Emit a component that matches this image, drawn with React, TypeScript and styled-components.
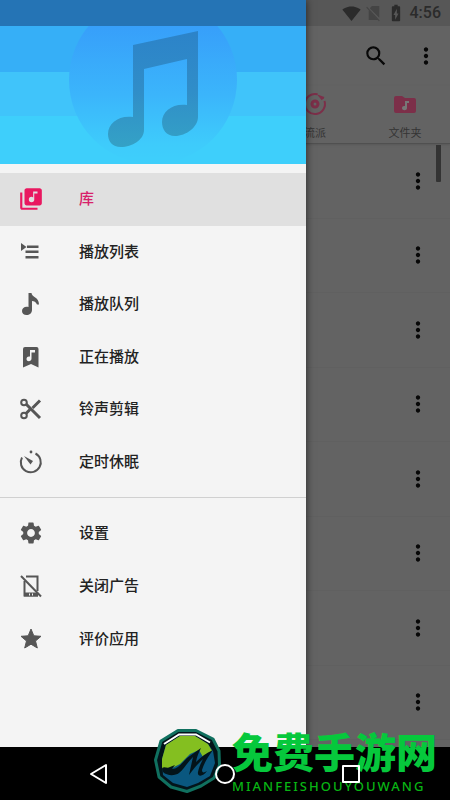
import React from "react";
import styled, { createGlobalStyle } from "styled-components";
import { MdLibraryMusic, MdSettings, MdSearch, MdMoreVert, MdSignalWifi4Bar, MdBatteryChargingFull } from "react-icons/md";

const GlobalStyle = createGlobalStyle`
  *, *::before, *::after { box-sizing: border-box; }
  body {
    margin: 0;
    background: #000;
    font-family: Roboto, "Noto Sans CJK SC", sans-serif;
  }
  button { font: inherit; color: inherit; border: 0; background: none; padding: 0; cursor: pointer; }
  a { color: inherit; text-decoration: none; }
  ul { list-style: none; margin: 0; padding: 0; }
  svg { display: block; flex: none; }
`;

const Screen = styled.div`
  position: relative;
  min-height: 100vh;
  display: flex;
  flex-direction: column;
  overflow: hidden;
`;

const Stage = styled.div`
  position: relative;
  flex: 1;
  display: flex;
`;

const Page = styled.main`
  flex: 1;
  display: flex;
  flex-direction: column;
  background: #636363;
`;

const StatusBar = styled.div`
  height: 26px;
  display: flex;
  align-items: center;
  justify-content: flex-end;
  gap: 4px;
  padding-right: 9px;
  background: #575757;
  color: #2b2b2b;
  font-size: 16px;
  line-height: 28px;
  font-weight: 500;
`;

const Toolbar = styled.header`
  height: 60px;
  display: flex;
  align-items: center;
  justify-content: flex-end;
  gap: 24px;
  padding-right: 11px;
  color: #080808;
`;

const IconButton = styled.button`
  display: flex;
  align-items: center;
  justify-content: center;
`;

const Tabs = styled.nav`
  height: 58px;
  display: flex;
  justify-content: flex-end;
  border-bottom: 1px solid #505050;
  box-shadow: 0 1px 2px #585858;
`;

const Tab = styled.a`
  width: 20%;
  display: flex;
  flex-direction: column;
  align-items: center;
  gap: 10px;
  padding-top: 6px;
  color: #343434;
  font-size: 11px;
  line-height: 16px;
`;

const Songs = styled.ul`
  flex: 1;
  display: flex;
  flex-direction: column;
  padding: 0 0 7px;
`;

const Song = styled.li`
  flex: 1;
  display: flex;
  align-items: center;
  justify-content: flex-end;
  padding-right: 19px;
  border-bottom: 1px solid #606060;
  color: #080808;
`;

const ScrollThumb = styled.div`
  position: absolute;
  top: 145px;
  right: 9px;
  width: 5px;
  height: 37px;
  border-radius: 0 0 1px 1px;
  background: #333;
`;

const Drawer = styled.aside`
  position: absolute;
  top: 0;
  bottom: 0;
  left: 0;
  width: 68%;
  background: #f4f4f4;
  box-shadow: 0 0 8px rgba(0, 0, 0, 0.6);
`;

const Cover = styled.div`
  height: 164px;
  padding-top: 26px;
  display: flex;
  justify-content: center;
  background: linear-gradient(
    #2574b5 26px,
    #36aff7 26px 72px,
    #40c4fa 72px 116px,
    #3ecffb 116px
  );
`;

const Menu = styled.ul<{ $height: number }>`
  height: ${(p) => p.$height}px;
  display: grid;
  grid-auto-rows: 1fr;
`;

const Group = styled.nav`
  padding: 9px 0;
  & + & { border-top: 1px solid #d0d0d0; }
`;

const MenuLink = styled.a<{ $active?: boolean }>`
  height: 100%;
  display: flex;
  align-items: center;
  gap: 35px;
  padding-left: 18px;
  background: ${(p) => (p.$active ? "#e0e0e0" : "transparent")};
  color: ${(p) => (p.$active ? "#d8216a" : "#222")};
  font-size: 15px;
  line-height: 24px;
  font-weight: 500;
  & > svg { color: ${(p) => (p.$active ? "#e91860" : "#565656")}; }
`;

const NavBar = styled.footer`
  height: 53px;
  display: flex;
  align-items: center;
  justify-content: center;
  gap: 106px;
  background: #000;
  color: #fff;
  & button { position: relative; z-index: 2; }
`;

const Watermark = styled.div`
  position: absolute;
  right: 13px;
  bottom: 6px;
  z-index: 1;
  display: flex;
  align-items: flex-end;
  gap: 10px;
  color: #06c83c;
`;

const Brand = styled.div`
  display: flex;
  flex-direction: column;
`;

const BrandName = styled.strong`
  font-family: "Noto Sans CJK SC", sans-serif;
  font-size: 41px;
  line-height: 56px;
  font-weight: 900;
`;

const BrandLatin = styled.span`
  font-family: "Noto Sans", sans-serif;
  font-size: 13px;
  line-height: 16px;
  font-weight: 500;
  letter-spacing: 2px;
  color: #08b414;
`;

const CoverArt = () => (
  <svg width="170" height="138" viewBox="68 26 170 138" aria-hidden="true">
    <defs>
      <linearGradient id="disc" x1="0" y1="26" x2="0" y2="164" gradientUnits="userSpaceOnUse">
        <stop offset="0" stopColor="#379ffa" />
        <stop offset="0.5" stopColor="#3bb5fb" />
        <stop offset="0.85" stopColor="#3ecbfb" />
        <stop offset="1" stopColor="#3ecffb" />
      </linearGradient>
      <linearGradient id="note" x1="0" y1="31" x2="0" y2="148" gradientUnits="userSpaceOnUse">
        <stop offset="0" stopColor="#2c83c9" />
        <stop offset="0.5" stopColor="#308dc8" />
        <stop offset="1" stopColor="#34a2c6" />
      </linearGradient>
    </defs>
    <circle cx="153" cy="80" r="84" fill="url(#disc)" />
    <path
      d="M133 45 198 31V117C198 127 186 136 175 136C166 136 162 129 162 122C162 111 173 103 187 105V59L144 69V130C144 140 132 147 121 147C112 147 108 141 108 134C108 123 119 115 133 117Z"
      fill="url(#note)"
    />
  </svg>
);

const PlaylistIcon = () => (
  <svg width="26" height="26" viewBox="0 0 26 26" fill="currentColor" aria-hidden="true">
    <path d="M3 4 8.500 8 3 12ZM9 6.500H20.500V9H9ZM7.500 11.500H20.500V14H7.500ZM7.500 17H20.500V19.500H7.500Z" />
  </svg>
);

const NoteIcon = () => (
  <svg width="26" height="26" viewBox="0 0 26 26" fill="currentColor" aria-hidden="true">
    <path d="M10.500 2H13.500C13.500 6 21 6 21 13.500H19C18 11 16 10 14 10V19C14 22 11.500 24 8.500 24C6 24 4 22.500 4 20C4 17 7 15 10.500 16Z" />
  </svg>
);

const BookmarkIcon = () => (
  <svg width="26" height="26" viewBox="0 0 26 26" fill="currentColor" aria-hidden="true">
    <path
      fillRule="evenodd"
      d="M7 3H18.500Q20.500 3 20.500 5V23.500L13 20 5 23.500V5Q5 3 7 3ZM12 6V12.500C9.500 12 8.500 13.500 8.500 15C8.500 18 13.500 18 13.500 14.500V8.500H17V6Z"
    />
  </svg>
);

const ScissorsIcon = () => (
  <svg width="26" height="26" viewBox="0 0 26 26" fill="none" stroke="currentColor" strokeWidth="2" aria-hidden="true">
    <circle cx="6" cy="6.500" r="2.800" />
    <circle cx="6" cy="19.500" r="2.800" />
    <path d="M8 8 22 22" strokeWidth="3" />
    <path d="M8 17.500 12 13.500M14.500 12 22 4.500" strokeWidth="3" />
  </svg>
);

const TimerIcon = () => (
  <svg width="26" height="26" viewBox="0 0 26 26" fill="none" stroke="currentColor" strokeWidth="2" aria-hidden="true">
    <path d="M17.500 4.500A10 10 0 1 1 4 8.500" />
    <path d="M6 7 15 12 12.500 15.500Z" fill="currentColor" stroke="none" />
    <circle cx="13" cy="3" r="1.400" fill="currentColor" stroke="none" />
  </svg>
);

const NoAdsIcon = () => (
  <svg width="26" height="26" viewBox="0 0 26 26" fill="none" stroke="currentColor" strokeWidth="2" aria-hidden="true">
    <path d="M8 3.500H19.500V18M6.500 8V22.500H20" />
    <path d="M6 21.500H20" strokeWidth="4" />
    <path d="M3 3 23 23.500" />
    <path d="M11 21.500H12M14 21.500H15" stroke="#f4f4f4" />
  </svg>
);

const StarIcon = () => (
  <svg width="26" height="26" viewBox="0 0 26 26" fill="currentColor" stroke="currentColor" strokeLinejoin="round" aria-hidden="true">
    <path d="M13 3 15.800 9.800 23 10.300 17.500 15 19.300 22 13 18.200 6.700 22 8.500 15 3 10.300 10.200 9.800Z" />
  </svg>
);

const GenreIcon = () => (
  <svg width="24" height="24" viewBox="0 0 24 24" fill="none" stroke="#7c2f49" strokeWidth="2" aria-hidden="true">
    <path d="M14.500 2.300A10 10 0 1 0 21.500 9" />
    <circle cx="12" cy="12" r="3" strokeWidth="3" />
    <path d="M19.500 7.500 17 4.500 21 6" />
  </svg>
);

const FolderIcon = () => (
  <svg width="24" height="24" viewBox="0 0 24 24" aria-hidden="true">
    <path d="M3 4H9L12 6H21Q23 6 23 8V19Q23 21 21 21H3Q1 21 1 19V6Q1 4 3 4Z" fill="#7c2f49" />
    <path d="M12 9H16V11H14V16C14 19 9 19 9 16C9 14 11 14 12 14Z" fill="#777" />
  </svg>
);

const NoSimIcon = () => (
  <svg width="17" height="18" viewBox="0 0 15 17" aria-hidden="true">
    <path d="M6 2H13V13L4 4ZM3 6 12 15H3Z" fill="#444" />
    <path d="M1 3 13 16" stroke="#444" />
  </svg>
);

const Emblem = () => (
  <svg width="68" height="66" viewBox="154 728 68 66" aria-hidden="true">
    <path
      d="M178 730.500H196L213 739 219 751 219.500 765 214 778 201 786 187 791.500 171 787 159 777 155.500 760 161 741Z"
      fill="#03141a"
      stroke="#10705f"
      strokeWidth="3"
      strokeLinejoin="round"
    />
    <path d="M162 759 166 745 180 736H195L208 744 213 751 215 763 210 776 198 783 187 787 173 783 163 775Z" fill="#0a577f" />
    <path d="M162 759 166 745 180 736H195L208 744 212 751 203 757 199 750 190 754 180 764 172 768 162 769Z" fill="#84bf20" />
    <path d="M164 744 179 734.500H196L210 742.500" fill="none" stroke="#fff" strokeWidth="2" />
    <path
      d="M162 768C165 766 167 769 170 767L175 765 172 769C178 769 182 763 187 758L201 748C199 752 197 756 196 762C201 757 206 753 213 750C208 757 204 763 202 770C202 773 204 773 207 771C203 777 197 777 198 772C199 767 201 763 203 759C198 764 194 768 189 775L193 757C187 763 184 769 179 773C175 776 167 776 163 772Z"
      fill="#03141a"
    />
  </svg>
);

const mainItems = [
  { label: "库", icon: <MdLibraryMusic size={26} />, active: true },
  { label: "播放列表", icon: <PlaylistIcon /> },
  { label: "播放队列", icon: <NoteIcon /> },
  { label: "正在播放", icon: <BookmarkIcon /> },
  { label: "铃声剪辑", icon: <ScissorsIcon /> },
  { label: "定时休眠", icon: <TimerIcon /> },
];

const moreItems = [
  { label: "设置", icon: <MdSettings size={26} /> },
  { label: "关闭广告", icon: <NoAdsIcon /> },
  { label: "评价应用", icon: <StarIcon /> },
];

const songs = [1, 2, 3, 4, 5, 6, 7, 8];

export default function App() {
  return (
    <>
      <GlobalStyle />
      <Screen>
        <Stage>
          <Page>
            <StatusBar>
              <MdSignalWifi4Bar size={19} />
              <NoSimIcon />
              <MdBatteryChargingFull size={20} />
              <span>4:56</span>
            </StatusBar>
            <Toolbar>
              <IconButton aria-label="搜索"><MdSearch size={26} /></IconButton>
              <IconButton aria-label="更多"><MdMoreVert size={26} /></IconButton>
            </Toolbar>
            <Tabs>
              <Tab href="#genre"><GenreIcon />流派</Tab>
              <Tab href="#folder"><FolderIcon />文件夹</Tab>
            </Tabs>
            <Songs>
              {songs.map((n) => (
                <Song key={n}>
                  <IconButton aria-label="歌曲选项"><MdMoreVert size={26} /></IconButton>
                </Song>
              ))}
            </Songs>
            <ScrollThumb />
          </Page>
          <Drawer>
            <Cover><CoverArt /></Cover>
            <Group>
              <Menu $height={315}>
                {mainItems.map((item) => (
                  <li key={item.label}>
                    <MenuLink href="#" $active={item.active}>{item.icon}{item.label}</MenuLink>
                  </li>
                ))}
              </Menu>
            </Group>
            <Group>
              <Menu $height={158}>
                {moreItems.map((item) => (
                  <li key={item.label}>
                    <MenuLink href="#">{item.icon}{item.label}</MenuLink>
                  </li>
                ))}
              </Menu>
            </Group>
          </Drawer>
        </Stage>
        <NavBar>
          <IconButton aria-label="返回">
            <svg width="20" height="22" viewBox="0 0 20 22" fill="none" stroke="currentColor" strokeWidth="2" strokeLinejoin="round">
              <path d="M17 2V20L2 11Z" />
            </svg>
          </IconButton>
          <IconButton aria-label="主页">
            <svg width="20" height="22" viewBox="0 0 20 22" fill="none" stroke="currentColor" strokeWidth="2">
              <circle cx="10" cy="11" r="9" />
            </svg>
          </IconButton>
          <IconButton aria-label="最近任务">
            <svg width="20" height="22" viewBox="0 0 20 22" fill="none" stroke="currentColor" strokeWidth="2" strokeLinejoin="round">
              <path d="M2 3H18V19H2Z" />
            </svg>
          </IconButton>
        </NavBar>
        <Watermark>
          <Emblem />
          <Brand>
            <BrandName>免费手游网</BrandName>
            <BrandLatin>MIANFEISHOUYOUWANG</BrandLatin>
          </Brand>
        </Watermark>
      </Screen>
    </>
  );
}
